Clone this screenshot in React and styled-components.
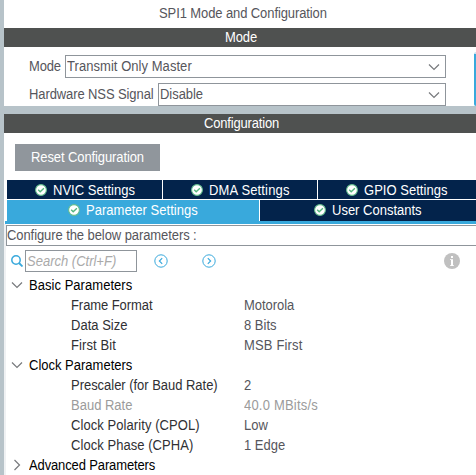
import React from "react";
import styled, { createGlobalStyle } from "styled-components";

const Global = createGlobalStyle`
  * { box-sizing: border-box; }
  body { margin: 0; background: #b7c3c9; overflow: hidden;
    font: 13px/16px "Liberation Sans", Arial, sans-serif; color: #56565c; }
`;
const Page = styled.div`
  width: 476px; height: 475px; padding-left: 4px; overflow: hidden;
  display: flex; flex-direction: column; gap: 8px; background: #b7c3c9;
`;
const Panel = styled.section`
  background: #fff; height: ${(p) => p.$height}px; flex: none; overflow: hidden;
`;
const Label = styled.span`
  display: inline-block; white-space: pre; letter-spacing: ${(p) => p.$track || 0}px;
  transform: scaleY(1.08); transform-origin: 0 70%;
`;
const Title = styled.header`
  height: 28px; padding: 6px 0 0 155px;
`;
const Bar = styled.h2`
  margin: 0; height: 19px; padding: 2px 0 0 ${(p) => p.$indent}px;
  background: #4f5150; color: #fff; font-size: 13px; font-weight: normal;
`;
const Fields = styled.div`
  display: flex; justify-content: space-between; padding-top: 5px;
`;
const FieldList = styled.div`
  display: grid; gap: 5px; width: 442px; padding: 3px 0 0 25px;
`;
const Field = styled.label`
  display: grid; grid-template-columns: ${(p) => p.$label}px 1fr; align-items: center; height: 23px;
`;
const Select = styled.div`
  height: 23px; border: 1px solid #8f959b; display: flex; align-items: center;
  justify-content: space-between; padding: 0 5px 0 1px;
`;
const SideButton = styled.div`
  width: 2px; height: 54px; background: #39a9dc; border-top: 2px solid #cfe3f2; border-radius: 2px 0 0 2px;
`;
const ResetButton = styled.button`
  display: block; width: 145px; height: 27px; margin: 11px 0 9px 11px; padding: 0 0 0 16px;
  border: 0; background: #90969c; color: #fff; font: inherit; text-align: left;
`;
const TabArea = styled.nav`
  margin-left: 1px; border-bottom: 3px solid #39a9dc; padding-left: 2px;
`;
const TabRow = styled.div`
  display: grid; grid-template-columns: ${(p) => p.$cols}; column-gap: 1px;
  height: ${(p) => p.$height}px; margin-bottom: ${(p) => p.$gap || 0}px;
`;
const Tab = styled.div`
  display: flex; align-items: flex-start; gap: 6px; color: #fff; white-space: nowrap;
  padding: 3px 0 0 ${(p) => p.$indent}px; background: ${(p) => (p.$active ? "#39a9dc" : "#03234b")};
  svg { flex: none; margin-top: 1px; }
`;
const Body = styled.div`
  border-left: 2px solid #eff1f3; padding-top: 1px; height: 252px;
`;
const Notice = styled.div`
  height: 21px; border: 1px solid #8f959b; border-right: 0; padding: 2px 0 0 0;
`;
const Toolbar = styled.div`
  display: flex; align-items: center; height: 22px; margin: 4px 0; padding: 0 16px 0 5px;
`;
const Search = styled.div`
  width: 112px; height: 22px; margin: 0 17px 0 2px; border: 1px solid #8f959b;
  padding: 3px 0 0 1px; color: #aaa; font-style: italic;
`;
const Navigate = styled.div`
  display: flex; gap: 34px; flex: 1;
`;
const Group = styled.div`
  display: grid; grid-template-columns: 23px 1fr; align-items: center; height: 20px; color: #000;
  svg { margin: -2px 0 0 5px; }
`;
const Row = styled.div`
  display: grid; grid-template-columns: 173px 1fr; align-items: center;
  height: 20px; padding-left: 65px; color: ${(p) => (p.$muted ? "#9b9b9b" : "#303033")};
`;
const Value = styled.span`
  color: ${(p) => (p.$muted ? "#9b9b9b" : "#56565c")};
`;

const Chevron = ({ right }) => (
  <svg width="12" height="12" viewBox="0 0 12 12" fill="none" stroke="#77797c" strokeWidth="1.2">
    <path d={right ? "M3.5 1 8.5 6l-5 5" : "M1 3.5 6 8.5l5-5"} />
  </svg>
);
const Check = () => (
  <svg width="12" height="12" viewBox="0 0 12 12" fill="none">
    <circle cx="6" cy="6" r="5.4" fill="#fff" stroke="#63bd8d" strokeWidth="1.1" />
    <path d="m3.2 5.8 2 2 3.7-3.5" stroke="#55b67e" strokeWidth="1.4" />
  </svg>
);
const Magnifier = () => (
  <svg width="12" height="12" viewBox="0 0 12 12" fill="none" stroke="#39a9dc">
    <circle cx="5" cy="5" r="4.2" strokeWidth="1.5" />
    <path d="m8 8 3.5 3.5" strokeWidth="1.8" />
  </svg>
);
const Step = ({ next }) => (
  <svg width="14" height="14" viewBox="0 0 14 14" fill="none" stroke="#39a9dc">
    <circle cx="7" cy="7" r="6.2" strokeWidth="1" />
    <path d={next ? "M5.8 4.2 8.6 7 5.8 9.8" : "M8.2 4.2 5.4 7l2.8 2.8"} strokeWidth="1.2" />
  </svg>
);
const Info = () => (
  <svg width="16" height="16" viewBox="0 0 16 16">
    <circle cx="8" cy="8" r="8" fill="#c0c0c0" />
    <path d="M7 3h2v2H7zM6 6.2h3v6h1V13H6v-.8h1V7H6z" fill="#fff" />
  </svg>
);

const groups = [
  { name: "Basic Parameters", open: true, track: 0.04, rows: [
    ["Frame Format", "Motorola"], ["Data Size", "8 Bits"], ["First Bit", "MSB First"],
  ] },
  { name: "Clock Parameters", open: true, rows: [
    ["Prescaler (for Baud Rate)", "2"], ["Baud Rate", "40.0 MBits/s", true],
    ["Clock Polarity (CPOL)", "Low"], ["Clock Phase (CPHA)", "1 Edge"],
  ] },
  { name: "Advanced Parameters", track: -0.13, rows: [] },
];
const tracking = {
  "Frame Format": -0.07, "Data Size": 0.02, "Motorola": -0.05, "MSB First": 0.15,
  "Clock Polarity (CPOL)": 0.07, "Clock Phase (CPHA)": 0.05, "40.0 MBits/s": 0.2,
  "Prescaler (for Baud Rate)": -0.03, "First Bit": 0.1,
};

export default function App() {
  return (
    <Page>
      <Global />
      <Panel $height={106}>
        <Title><Label $track={-0.1}>SPI1 Mode and Configuration</Label></Title>
        <Bar $indent={221}><Label $track={-0.1}>Mode</Label></Bar>
        <Fields>
          <FieldList>
            <Field $label={36}><Label $track={-0.2}>Mode</Label><Select><Label $track={0.05}>Transmit Only Master</Label><Chevron /></Select></Field>
            <Field $label={129}><Label $track={-0.1}>Hardware NSS Signal</Label><Select><Label $track={-0.05}>Disable</Label><Chevron /></Select></Field>
          </FieldList>
          <SideButton />
        </Fields>
      </Panel>
      <Panel $height={361}>
        <Bar $indent={200}><Label $track={-0.18}>Configuration</Label></Bar>
        <ResetButton><Label $track={-0.1}>Reset Configuration</Label></ResetButton>
        <TabArea>
          <TabRow $cols="155px 154px 1fr" $height={19} $gap={1}>
            <Tab $indent={28}><Check /><Label $track={0.03}>NVIC Settings</Label></Tab>
            <Tab $indent={28}><Check /><Label $track={0.15}>DMA Settings</Label></Tab>
            <Tab $indent={28}><Check /><Label $track={0.03}>GPIO Settings</Label></Tab>
          </TabRow>
          <TabRow $cols="252px 1fr" $height={21}>
            <Tab $active $indent={61}><Check /><Label $track={0.03}>Parameter Settings</Label></Tab>
            <Tab $indent={54}><Check /><Label>User Constants</Label></Tab>
          </TabRow>
        </TabArea>
        <Body>
          <Notice><Label $track={-0.08}>Configure the below parameters :</Label></Notice>
          <Toolbar>
            <Magnifier />
            <Search><Label>Search (Ctrl+F)</Label></Search>
            <Navigate><Step /><Step next /></Navigate>
            <Info />
          </Toolbar>
          {groups.map((group) => (
            <React.Fragment key={group.name}>
              <Group><Chevron right={!group.open} /><Label $track={group.track}>{group.name}</Label></Group>
              {group.rows.map(([name, value, muted]) => (
                <Row key={name} $muted={muted}>
                  <Label $track={tracking[name]}>{name}</Label>
                  <Value $muted={muted}><Label $track={tracking[value]}>{value}</Label></Value>
                </Row>
              ))}
            </React.Fragment>
          ))}
        </Body>
      </Panel>
    </Page>
  );
}
